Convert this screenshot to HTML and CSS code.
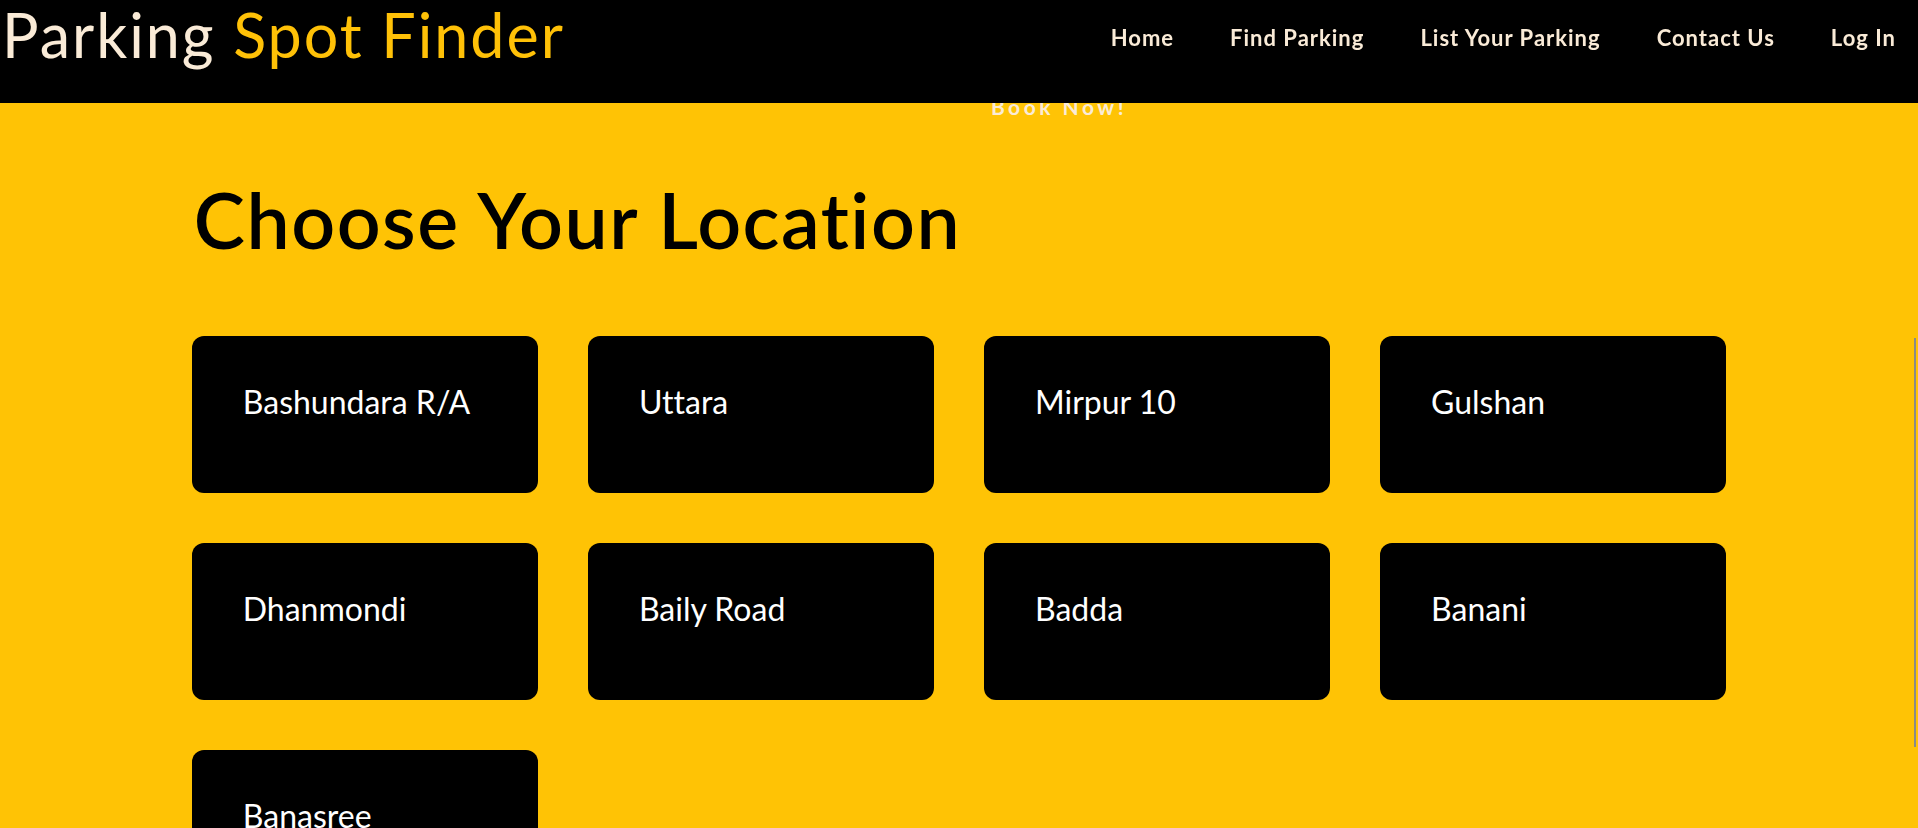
FILE: index.html
```html
<!DOCTYPE html>
<html lang="en">
<head>
<meta charset="utf-8">
<title>Parking Spot Finder</title>
<link rel="stylesheet" href="styles.css">
</head>
<body>
<header class="header">
  <div class="logo">Parking <span class="logo-accent">Spot Finder</span></div>
  <nav class="nav">
    <a class="nav-link" href="#">Home</a>
    <a class="nav-link" href="#">Find Parking</a>
    <a class="nav-link" href="#">List Your Parking</a>
    <a class="nav-link" href="#">Contact Us</a>
    <a class="nav-link" href="#">Log In</a>
  </nav>
</header>
<main class="main">
  <div class="hero">
    <a class="book-btn" href="#">Book Now!</a>
  </div>
  <section class="locations">
    <h1 class="title">Choose Your Location</h1>
    <div class="grid">
      <div class="card">Bashundara R/A</div>
      <div class="card">Uttara</div>
      <div class="card">Mirpur 10</div>
      <div class="card">Gulshan</div>
      <div class="card">Dhanmondi</div>
      <div class="card">Baily Road</div>
      <div class="card">Badda</div>
      <div class="card">Banani</div>
      <div class="card">Banasree</div>
    </div>
  </section>
</main>
<div class="scroll-thumb"></div>
</body>
</html>
```
FILE: styles.css
```css
html, body {
  margin: 0;
  padding: 0;
  height: 100%;
  overflow: hidden;
}
body {
  background: #ffc305;
  font-family: Lato, "Open Sans", sans-serif;
  font-variant-ligatures: none;
}
.header {
  position: fixed;
  top: 0;
  left: 0;
  right: 0;
  height: 103px;
  background: #000;
  display: flex;
  justify-content: space-between;
  align-items: flex-start;
  z-index: 10;
}
.logo {
  font-size: 61px;
  line-height: 1;
  letter-spacing: 2px;
  margin: 4px 0 0 2px;
  color: #faebd7;
  white-space: nowrap;
}
.logo-accent {
  color: #ffc107;
}
.nav {
  display: flex;
  gap: 56px;
  padding: 25px 22px 0 0;
}
.nav-link {
  color: #faebd7;
  text-decoration: none;
  font-weight: 700;
  font-size: 22px;
  letter-spacing: 1px;
  line-height: 1.2;
}
.main {
  display: flex;
  flex-direction: column;
}
.hero {
  height: 117px;
  display: flex;
  align-items: flex-end;
  justify-content: center;
  padding-left: 200px;
}
.book-btn {
  color: #faebd7;
  text-decoration: none;
  font-weight: 700;
  font-size: 21px;
  letter-spacing: 3.5px;
  line-height: 1;
}
.locations {
  width: 80%;
  margin: 0 auto;
}
.title {
  font-size: 77px;
  font-weight: 600;
  letter-spacing: 1.5px;
  line-height: 90px;
  margin: 57px 0 72px 2px;
  color: #000;
}
.grid {
  display: grid;
  grid-template-columns: repeat(4, 1fr);
  gap: 50px;
}
.card {
  background: #000;
  color: #fff;
  border-radius: 12px;
  height: 157px;
  box-sizing: border-box;
  padding: 47px 20px 0 51px;
  font-size: 32px;
  line-height: 1.2;
}
.scroll-thumb {
  position: fixed;
  right: 2px;
  top: 338px;
  width: 2px;
  height: 409px;
  background: #8a8a8a;
}
```
